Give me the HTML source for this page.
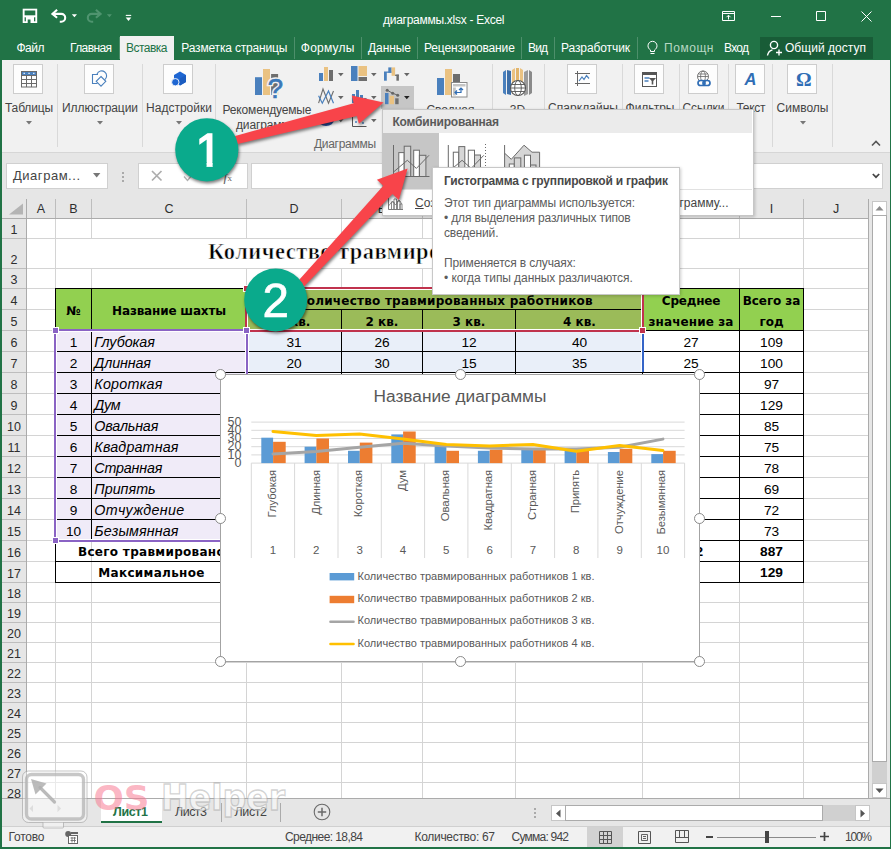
<!DOCTYPE html><html lang="ru"><head><meta charset="utf-8"><title>диаграммы.xlsx - Excel</title><style>
*{box-sizing:border-box;margin:0;padding:0}
html,body{width:891px;height:849px;overflow:hidden;background:#fff}
body{position:relative;font-family:"Liberation Sans",sans-serif;font-size:12px;color:#444;}
.a{position:absolute;white-space:nowrap}
.t{position:absolute;white-space:nowrap;line-height:1}
.c{text-align:center}
.w{color:#fff}
svg{position:absolute;overflow:visible}
</style></head><body>
<div class="a" style="left:0px;top:0px;width:891px;height:60px;background:#217346"></div>
<div class="t" style="left:383px;top:14px;color:#fff;font-size:12px;letter-spacing:-0.273px">диаграммы.xlsx - Excel</div>
<svg style="left:0;top:0" width="150" height="33" viewBox="0 0 150 33" fill="none" stroke="#fff">
<rect x="22.700" y="8.700" width="14.500" height="14.300" fill="#fff" stroke="none"/><rect x="24.600" y="10.500" width="10.700" height="4.800" fill="#217346" stroke="none"/>
<rect x="24.600" y="17.300" width="1.300" height="4" fill="#217346" stroke="none"/><rect x="34" y="17.300" width="1.300" height="4" fill="#217346" stroke="none"/><rect x="27.700" y="19.500" width="2.800" height="3.500" fill="#217346" stroke="none"/>
<path d="M57.100 9.700l-4.700 4.200 4.700 3.900" stroke-width="2.100"/><path d="M52.800 13.900h8.500a3.900 3.900 0 0 1 0 7.800h-1.500" stroke-width="2.100"/>
<path d="M71.800 14.300h5.200l-2.600 3z" fill="#fff" stroke="none"/>
<g stroke="#4f946f"><path d="M95.900 9.700l4.700 4.200-4.700 3.900" stroke-width="2.100"/><path d="M100.200 13.900h-8.500a3.900 3.900 0 0 0 0 7.800h1.500" stroke-width="2.100"/></g>
<path d="M106.900 14.300h5l-2.500 3z" fill="#4f946f" stroke="none"/>
<path d="M125.800 15.400h5.400" stroke-width="1.100"/><path d="M125.700 17.400h5.600l-2.800 3.500z" fill="#fff" stroke="none"/>
</svg>
<svg style="left:700px;top:0" width="191" height="33" viewBox="700 0 191 33" fill="none" stroke="#fff" stroke-width="1">
<path d="M722.500 11.500h12v9h-12z"/><path d="M722.500 13.500h12"/><path d="M728.500 19.500v-4M726.500 17.200l2-2 2 2"/>
<path d="M771 16.5h10"/>
<path d="M816.5 11.5h9v9h-9z"/>
<path d="M861.5 11.5l10 10M871.5 11.5l-10 10"/>
</svg>
<div class="a" style="left:120px;top:36px;width:54px;height:24px;background:#f1f1f1"></div>
<div class="a" style="left:119px;top:37px;width:1px;height:22px;background:#4d8f6b"></div>
<div class="t" style="left:16.5px;top:41.8px;color:#fff;font-size:12px;letter-spacing:-0.501px">Файл</div>
<div class="t" style="left:70px;top:41.8px;color:#fff;font-size:12px;letter-spacing:-0.612px">Главная</div>
<div class="t" style="left:126px;top:41.8px;color:#217346;font-size:12px;letter-spacing:-0.517px">Вставка</div>
<div class="t" style="left:181.3px;top:41.8px;color:#fff;font-size:12px;letter-spacing:-0.179px">Разметка страницы</div>
<div class="t" style="left:300.8px;top:41.8px;color:#fff;font-size:12px;letter-spacing:0.230px">Формулы</div>
<div class="t" style="left:368px;top:41.8px;color:#fff;font-size:12px;letter-spacing:-0.071px">Данные</div>
<div class="t" style="left:424px;top:41.8px;color:#fff;font-size:12px;letter-spacing:-0.143px">Рецензирование</div>
<div class="t" style="left:528px;top:41.8px;color:#fff;font-size:12px;letter-spacing:-0.855px">Вид</div>
<div class="t" style="left:561px;top:41.8px;color:#fff;font-size:12px;letter-spacing:-0.098px">Разработчик</div>
<div class="t" style="left:664px;top:41.8px;color:#b8d8c4;font-size:12px;letter-spacing:0.555px">Помощн</div>
<div class="t" style="left:724px;top:41.8px;color:#fff;font-size:12px;letter-spacing:-0.716px">Вход</div>
<div class="a" style="left:294px;top:37px;width:1px;height:22px;background:#4d8f6b"></div>
<div class="a" style="left:361px;top:37px;width:1px;height:22px;background:#4d8f6b"></div>
<div class="a" style="left:417px;top:37px;width:1px;height:22px;background:#4d8f6b"></div>
<div class="a" style="left:521px;top:37px;width:1px;height:22px;background:#4d8f6b"></div>
<div class="a" style="left:554px;top:37px;width:1px;height:22px;background:#4d8f6b"></div>
<div class="a" style="left:637px;top:37px;width:1px;height:22px;background:#4d8f6b"></div>
<svg style="left:645px;top:38px" width="16" height="20" viewBox="0 0 16 20" fill="none" stroke="#fff" stroke-width="1">
<path d="M5.5 13.5v-1.5c-1.5-1-2.5-2.3-2.5-4.2a4.5 4.5 0 0 1 9 0c0 1.900-1 3.200-2.500 4.200v1.500z"/><path d="M5.500 15.500h4"/></svg>
<div class="a" style="left:760px;top:37px;width:113px;height:22px;background:#185c37"></div>
<svg style="left:766px;top:39px" width="18" height="18" viewBox="0 0 18 18" fill="none" stroke="#fff" stroke-width="1.4">
<circle cx="8" cy="6" r="3.6"/><path d="M1.5 16.500c0.500-3 2.500-5 5-5.600"/><path d="M13 10.500v6M10 13.500h6"/></svg>
<div class="t" style="left:785px;top:41.8px;color:#fff;font-size:12px;letter-spacing:0.034px">Общий доступ</div>
<div class="a" style="left:0px;top:60px;width:891px;height:92px;background:#f1f1f1"></div>
<div class="a" style="left:0px;top:152px;width:891px;height:1px;background:#d6d6d6"></div>
<div class="a" style="left:13px;top:64px;width:30px;height:30px;background:#fdfdfd;border:1px solid #cdcdcd"></div>
<div class="a" style="left:84px;top:64px;width:30px;height:30px;background:#fdfdfd;border:1px solid #cdcdcd"></div>
<div class="a" style="left:163px;top:64px;width:30px;height:30px;background:#fdfdfd;border:1px solid #cdcdcd"></div>
<div class="t" style="left:5.0px;top:101.5px;font-size:12px;color:#444;letter-spacing:-0.167px;">Таблицы</div>
<div class="t" style="left:62.0px;top:101.5px;font-size:12px;color:#444;letter-spacing:-0.075px;">Иллюстрации</div>
<div class="t" style="left:146.0px;top:101.5px;font-size:12px;color:#444;letter-spacing:0.018px;">Надстройки</div>
<svg style="left:26px;top:121px" width="6" height="4" viewBox="0 0 6 4"><path d="M0 0h6l-3 3.500z" fill="#777"/></svg>
<svg style="left:97px;top:121px" width="6" height="4" viewBox="0 0 6 4"><path d="M0 0h6l-3 3.500z" fill="#777"/></svg>
<svg style="left:176px;top:121px" width="6" height="4" viewBox="0 0 6 4"><path d="M0 0h6l-3 3.500z" fill="#777"/></svg>
<div class="a" style="left:57px;top:64px;width:1px;height:83px;background:#d9d9d9"></div>
<div class="a" style="left:142px;top:64px;width:1px;height:83px;background:#d9d9d9"></div>
<div class="a" style="left:215px;top:64px;width:1px;height:83px;background:#d9d9d9"></div>
<div class="a" style="left:492px;top:64px;width:1px;height:83px;background:#d9d9d9"></div>
<div class="a" style="left:544px;top:64px;width:1px;height:83px;background:#d9d9d9"></div>
<div class="a" style="left:622px;top:64px;width:1px;height:83px;background:#d9d9d9"></div>
<div class="a" style="left:679px;top:64px;width:1px;height:83px;background:#d9d9d9"></div>
<div class="a" style="left:728px;top:64px;width:1px;height:83px;background:#d9d9d9"></div>
<div class="a" style="left:772px;top:64px;width:1px;height:83px;background:#d9d9d9"></div>
<div class="a" style="left:832px;top:64px;width:1px;height:83px;background:#d9d9d9"></div>
<svg style="left:13px;top:64px" width="30" height="30" viewBox="0 0 30 30">
<rect x="8" y="7" width="16" height="4.500" fill="#4a80bd"/><rect x="8.500" y="7.500" width="15" height="15.500" fill="none" stroke="#6a6a6a"/>
<path d="M8.500 15.500h15M8.500 19.500h15M8.500 11.500h15M13.500 11.500v11.500M18.500 11.500v11.500" stroke="#6a6a6a" fill="none"/>
<path d="M10.500 9.300h1.500M15.300 9.300h1.500M20 9.300h1.500" stroke="#fff" stroke-width="1"/></svg>
<svg style="left:84px;top:64px" width="30" height="30" viewBox="0 0 30 30" fill="none" stroke="#4a80bd" stroke-width="1.100">
<path d="M14 10.500h-5.500v9h5"/><path d="M13 10a5 5 0 1 1 7.500 6"/><path d="M17 12.500l4.800 4.800-4.800 4.800-4.800-4.800z" fill="#fdfdfd"/></svg>
<svg style="left:163px;top:64px" width="30" height="30" viewBox="0 0 30 30">
<path d="M17 7.500l6 3.500v7l-6 3.500-6-3.500v-7z" fill="#1e66d2"/><path d="M17 14.500l6-3.500v7l-6 3.500z" fill="#1b5cc0"/>
<circle cx="12.300" cy="18.200" r="3.700" fill="#1e66d2" stroke="#fdfdfd" stroke-width="0.900"/></svg>
<svg style="left:255px;top:66px" width="32" height="34" viewBox="0 0 32 34">
<rect x="0" y="11.200" width="7" height="17.800" fill="#4a80bd"/><rect x="8" y="3" width="7" height="26" fill="#eac282"/><rect x="16.100" y="8" width="7" height="21" fill="#6e6e6e"/>
<text x="12.700" y="31.700" font-family="Liberation Sans,sans-serif" font-size="27.500" fill="#f1f1f1" stroke="#f1f1f1" stroke-width="3.600">?</text>
<text x="12.700" y="31.700" font-family="Liberation Sans,sans-serif" font-size="27.500" fill="#3b78b8" stroke="#3b78b8" stroke-width="0.700">?</text></svg>
<div class="t" style="left:222.5px;top:103.5px;font-size:12px;color:#444;letter-spacing:-0.154px;">Рекомендуемые</div>
<div class="t" style="left:236.0px;top:118.5px;font-size:12px;color:#444;letter-spacing:-0.154px;">диаграммы</div>
<svg style="left:318px;top:64px" width="100" height="66" viewBox="318 64 100 66">
<rect x="319" y="73" width="4" height="8" fill="#4a80bd"/><rect x="324" y="67" width="4" height="14" fill="#eac282"/><rect x="329" y="70" width="4" height="11" fill="#6e6e6e"/>
<rect x="351" y="66" width="6.500" height="15" fill="#4a80bd"/><rect x="358.500" y="66" width="8.500" height="10" fill="#eac282"/><rect x="358.500" y="77" width="8.500" height="4" fill="#6e6e6e"/>
<rect x="384" y="72" width="2.800" height="8.700" fill="#4a80bd"/><rect x="384" y="71.500" width="7.500" height="1.300" fill="#4a80bd"/><rect x="388.300" y="67.400" width="3.300" height="5.400" fill="#4a80bd"/>
<rect x="391.600" y="67.400" width="3.500" height="8.400" fill="#eac282"/><rect x="395.100" y="74.600" width="3.800" height="1.400" fill="#6e6e6e"/><rect x="396.400" y="74.600" width="2.500" height="6.100" fill="#6e6e6e"/>
<rect x="381" y="86" width="33" height="23" fill="#c6c6c6"/>
<path d="M318.600 103.200l4.400-14.200 5.500 14.200 5-12.200" fill="none" stroke="#6e6e6e" stroke-width="1.100"/><path d="M318.600 95.800l3.700 7.400 6.200-12.300 5 12.300" fill="none" stroke="#4a80bd" stroke-width="1.200"/>
<rect x="352" y="94" width="3" height="9" fill="#4a80bd"/><rect x="356" y="90" width="3" height="13" fill="#4a80bd"/><rect x="360" y="95" width="3" height="8" fill="#4a80bd"/><rect x="364" y="98" width="2.500" height="5" fill="#4a80bd"/>
<rect x="385" y="93" width="3.500" height="11.200" fill="#4a80bd"/><rect x="389.600" y="95.800" width="4.400" height="8.400" fill="#eac282"/><rect x="395.200" y="98.300" width="3.400" height="5.900" fill="#6e6e6e"/>
<path d="M387.200 90.200l5.500 3.100 5 1.900" fill="none" stroke="#666" stroke-width="1"/><circle cx="387.200" cy="90.200" r="1.500" fill="#666"/><circle cx="392.700" cy="93.300" r="1.500" fill="#666"/><circle cx="397.700" cy="95.200" r="1.500" fill="#666"/>
<ellipse cx="326" cy="120" rx="8" ry="6" fill="#2d4f9e"/><path d="M326 120l8-2a8 6 0 0 0-8-4z" fill="#eac282"/>
<path d="M352.500 112v14.500h14" fill="none" stroke="#555" stroke-width="1"/>
<circle cx="356" cy="122" r="1" fill="#4a80bd"/><circle cx="360" cy="119" r="1" fill="#eac282"/><circle cx="363" cy="123" r="1" fill="#4a80bd"/><circle cx="364" cy="117" r="1" fill="#eac282"/>
</svg>
<svg style="left:338px;top:73px" width="6" height="4" viewBox="0 0 6 4"><path d="M0 0h5.600l-2.800 3.200z" fill="#666"/></svg>
<svg style="left:371px;top:73px" width="6" height="4" viewBox="0 0 6 4"><path d="M0 0h5.600l-2.800 3.200z" fill="#666"/></svg>
<svg style="left:404px;top:73px" width="6" height="4" viewBox="0 0 6 4"><path d="M0 0h5.600l-2.800 3.200z" fill="#666"/></svg>
<svg style="left:338px;top:96px" width="6" height="4" viewBox="0 0 6 4"><path d="M0 0h5.600l-2.800 3.200z" fill="#666"/></svg>
<svg style="left:371px;top:96px" width="6" height="4" viewBox="0 0 6 4"><path d="M0 0h5.600l-2.800 3.200z" fill="#666"/></svg>
<svg style="left:404px;top:96px" width="6" height="4" viewBox="0 0 6 4"><path d="M0 0h5.600l-2.800 3.200z" fill="#222"/></svg>
<svg style="left:338px;top:119px" width="6" height="4" viewBox="0 0 6 4"><path d="M0 0h5.600l-2.800 3.200z" fill="#666"/></svg>
<svg style="left:371px;top:119px" width="6" height="4" viewBox="0 0 6 4"><path d="M0 0h5.600l-2.800 3.200z" fill="#666"/></svg>
<div class="t" style="left:314.0px;top:138.3px;font-size:12px;color:#666;letter-spacing:-0.294px;">Диаграммы</div>
<svg style="left:436px;top:68px" width="32" height="30" viewBox="436 68 32 30">
<rect x="437" y="78" width="7" height="17" fill="#4a80bd"/><rect x="445" y="69" width="7" height="26" fill="#eac282"/><rect x="453" y="74" width="7" height="9" fill="#6e6e6e"/>
<rect x="451.500" y="82.500" width="15.500" height="14.500" fill="#fff" stroke="#8a8a8a"/><rect x="453" y="84" width="12.500" height="2.500" fill="#c4c4c4"/><rect x="453" y="87.500" width="2.800" height="8" fill="#c4c4c4"/>
<path d="M455 92.500h6v-4M459 90l2-2 2 2M457 90.500l-2 2 2 2" fill="none" stroke="#2f6db5" stroke-width="1.200"/></svg>
<div class="t" style="left:426.4px;top:103.5px;font-size:12px;color:#444;">Сводная</div>
<svg style="left:502px;top:66px" width="32" height="32" viewBox="502 66 32 32">
<path d="M503 72l3-2v25l-3-2z" fill="#4a80bd"/><path d="M507 70l4 1v24l-4-1z" fill="#3e6fa8"/>
<path d="M512 70l3-2v24l-3 2z" fill="#eac282"/><path d="M516 68l3 0v24h-3z" fill="#e2b56c"/><path d="M520 68l3 2v22l-3-0z" fill="#eac282"/>
<path d="M524 72l4-2v24l-4 2z" fill="#9b9b9b"/><path d="M529 70l3 2v21l-3 2z" fill="#8a8a8a"/>
<circle cx="518" cy="88" r="7.500" fill="#fff" stroke="#555" stroke-width="1.100"/><ellipse cx="518" cy="88" rx="3.300" ry="7.500" fill="none" stroke="#555" stroke-width="0.900"/><path d="M510.500 88h15M511.500 84.500h13M511.500 91.500h13" stroke="#555" stroke-width="0.900" fill="none"/></svg>
<div class="t" style="left:509.8px;top:103.5px;font-size:12px;color:#444;">3D</div>
<div class="a" style="left:567px;top:64px;width:30px;height:30px;background:#fdfdfd;border:1px solid #cdcdcd"></div>
<svg style="left:567px;top:64px" width="30" height="30" viewBox="0 0 30 30" fill="none">
<path d="M10.500 7v15M8 9.500h15M8 19.500h15" stroke="#666" stroke-width="1"/><path d="M12 17l3-4 2 2.500 2.500-4 2.500 3" stroke="#4a80bd" stroke-width="1.200"/></svg>
<div class="t" style="left:548.0px;top:101.5px;font-size:12px;color:#444;letter-spacing:0.052px;">Спарклайны</div>
<div class="a" style="left:634px;top:64px;width:30px;height:30px;background:#fdfdfd;border:1px solid #cdcdcd"></div>
<svg style="left:634px;top:64px" width="30" height="30" viewBox="0 0 30 30">
<rect x="8.500" y="8.500" width="14" height="14" fill="#fff" stroke="#555"/><rect x="8" y="8" width="15" height="3" fill="#555"/>
<path d="M10.500 14h5M10.500 17h4" stroke="#4a80bd" stroke-width="1.400"/><path d="M15 14h7l-2.700 3v3.500h-1.600v-3.500z" fill="#555"/></svg>
<div class="t" style="left:625.5px;top:101.5px;font-size:12px;color:#444;letter-spacing:0.010px;">Фильтры</div>
<div class="a" style="left:688px;top:64px;width:30px;height:30px;background:#fdfdfd;border:1px solid #cdcdcd"></div>
<svg style="left:688px;top:64px" width="30" height="30" viewBox="0 0 30 30" fill="none">
<circle cx="15" cy="12.500" r="5.500" stroke="#666" stroke-width="0.900"/><ellipse cx="15" cy="12.500" rx="2.400" ry="5.500" stroke="#666" stroke-width="0.800"/><path d="M9.500 12.500h11M10.300 10h9.400" stroke="#666" stroke-width="0.800"/>
<rect x="10" y="16.500" width="7" height="5" rx="2.500" stroke="#2f6db5" stroke-width="1.700" fill="#fdfdfd"/><rect x="15" y="16.500" width="7" height="5" rx="2.500" stroke="#2f6db5" stroke-width="1.700"/></svg>
<div class="t" style="left:682.5px;top:101.5px;font-size:12px;color:#444;letter-spacing:-0.049px;">Ссылки</div>
<div class="a" style="left:735px;top:64px;width:30px;height:30px;background:#fdfdfd;border:1px solid #cdcdcd"></div>
<div class="t" style="left:744.5px;top:70.5px;font-style:italic;font-weight:bold;font-size:16.500px;color:#2f6db5">A</div>
<div class="t" style="left:736.5px;top:101.5px;font-size:12px;color:#444;letter-spacing:-0.303px;">Текст</div>
<div class="a" style="left:787px;top:64px;width:30px;height:30px;background:#fdfdfd;border:1px solid #cdcdcd"></div>
<div class="t" style="left:796px;top:69.5px;font-family:Liberation Serif,serif;font-weight:bold;font-size:19.500px;color:#2f6db5">Ω</div>
<div class="t" style="left:776.5px;top:101.5px;font-size:12px;color:#444;letter-spacing:0.017px;">Символы</div>
<svg style="left:799.5px;top:121px" width="6" height="4" viewBox="0 0 6 4"><path d="M0 0h6l-3 3.500z" fill="#777"/></svg>
<svg style="left:871px;top:140px" width="10" height="7" viewBox="0 0 10 7"><path d="M1 5.500l4-4 4 4" fill="none" stroke="#555" stroke-width="1.600"/></svg>
<div class="a" style="left:0px;top:153px;width:891px;height:44px;background:#e6e6e6"></div>
<div class="a" style="left:6px;top:163px;width:102px;height:26px;background:#fff;border:1px solid #d0d0d0"></div>
<div class="t" style="left:13px;top:169px;font-size:13px;color:#444;letter-spacing:0.525px">Диаграм...</div>
<svg style="left:93px;top:173px" width="8" height="5" viewBox="0 0 8 5"><path d="M0 0h7.400l-3.700 4.400z" fill="#777"/></svg>
<div class="a" style="left:122px;top:172px;width:1.5px;height:1.5px;background:#aaa"></div>
<div class="a" style="left:122px;top:176px;width:1.5px;height:1.5px;background:#aaa"></div>
<div class="a" style="left:122px;top:180px;width:1.5px;height:1.5px;background:#aaa"></div>
<div class="a" style="left:138px;top:163px;width:110px;height:26px;background:#fff;border:1px solid #d0d0d0"></div>
<svg style="left:151px;top:170px" width="12" height="12" viewBox="0 0 12 12"><path d="M1 1l9.500 9.500M10.500 1l-9.500 9.500" stroke="#adadad" stroke-width="1.700" fill="none"/></svg>
<svg style="left:183px;top:170px" width="14" height="12" viewBox="0 0 14 12"><path d="M1 6.500l3.500 4 8-9.500" stroke="#b0b0b0" stroke-width="1.300" fill="none"/></svg>
<div class="t" style="left:223.5px;top:170px;font-family:Liberation Serif,serif;font-size:14px;color:#666"><i>f</i><span style="font-size:9px">x</span></div>
<div class="a" style="left:251px;top:163px;width:632px;height:26px;background:#fff;border:1px solid #d0d0d0"></div>
<svg style="left:872px;top:172.500px" width="8" height="6" viewBox="0 0 8 6"><path d="M0.800 1l3.200 3.200 3.200-3.200" fill="none" stroke="#444" stroke-width="1.700"/></svg>
<div class="a" style="left:0px;top:197px;width:891px;height:22px;background:#e6e6e6"></div>
<div class="a" style="left:0px;top:219px;width:27px;height:579px;background:#e6e6e6"></div>
<div class="a" style="left:869px;top:197px;width:22px;height:606px;background:#e6e6e6"></div>
<div class="a" style="left:27px;top:219px;width:841px;height:579px;background:#fff"></div>
<div class="a" style="left:55px;top:219px;width:1px;height:579px;background:#d4d4d4"></div>
<div class="a" style="left:91px;top:219px;width:1px;height:579px;background:#d4d4d4"></div>
<div class="a" style="left:246px;top:219px;width:1px;height:579px;background:#d4d4d4"></div>
<div class="a" style="left:341px;top:219px;width:1px;height:579px;background:#d4d4d4"></div>
<div class="a" style="left:422px;top:219px;width:1px;height:579px;background:#d4d4d4"></div>
<div class="a" style="left:515px;top:219px;width:1px;height:579px;background:#d4d4d4"></div>
<div class="a" style="left:642px;top:219px;width:1px;height:579px;background:#d4d4d4"></div>
<div class="a" style="left:739px;top:219px;width:1px;height:579px;background:#d4d4d4"></div>
<div class="a" style="left:803px;top:219px;width:1px;height:579px;background:#d4d4d4"></div>
<div class="a" style="left:27px;top:238px;width:841px;height:1px;background:#d4d4d4"></div>
<div class="a" style="left:27px;top:268px;width:841px;height:1px;background:#d4d4d4"></div>
<div class="a" style="left:27px;top:288px;width:841px;height:1px;background:#d4d4d4"></div>
<div class="a" style="left:27px;top:309px;width:841px;height:1px;background:#d4d4d4"></div>
<div class="a" style="left:27px;top:330px;width:841px;height:1px;background:#d4d4d4"></div>
<div class="a" style="left:27px;top:351px;width:841px;height:1px;background:#d4d4d4"></div>
<div class="a" style="left:27px;top:372px;width:841px;height:1px;background:#d4d4d4"></div>
<div class="a" style="left:27px;top:393px;width:841px;height:1px;background:#d4d4d4"></div>
<div class="a" style="left:27px;top:414px;width:841px;height:1px;background:#d4d4d4"></div>
<div class="a" style="left:27px;top:435px;width:841px;height:1px;background:#d4d4d4"></div>
<div class="a" style="left:27px;top:456px;width:841px;height:1px;background:#d4d4d4"></div>
<div class="a" style="left:27px;top:477px;width:841px;height:1px;background:#d4d4d4"></div>
<div class="a" style="left:27px;top:498px;width:841px;height:1px;background:#d4d4d4"></div>
<div class="a" style="left:27px;top:519px;width:841px;height:1px;background:#d4d4d4"></div>
<div class="a" style="left:27px;top:540px;width:841px;height:1px;background:#d4d4d4"></div>
<div class="a" style="left:27px;top:561px;width:841px;height:1px;background:#d4d4d4"></div>
<div class="a" style="left:27px;top:582px;width:841px;height:1px;background:#d4d4d4"></div>
<div class="a" style="left:27px;top:602px;width:841px;height:1px;background:#d4d4d4"></div>
<div class="a" style="left:27px;top:622px;width:841px;height:1px;background:#d4d4d4"></div>
<div class="a" style="left:27px;top:642px;width:841px;height:1px;background:#d4d4d4"></div>
<div class="a" style="left:27px;top:662px;width:841px;height:1px;background:#d4d4d4"></div>
<div class="a" style="left:27px;top:682px;width:841px;height:1px;background:#d4d4d4"></div>
<div class="a" style="left:27px;top:702px;width:841px;height:1px;background:#d4d4d4"></div>
<div class="a" style="left:27px;top:722px;width:841px;height:1px;background:#d4d4d4"></div>
<div class="a" style="left:27px;top:742px;width:841px;height:1px;background:#d4d4d4"></div>
<div class="a" style="left:27px;top:762px;width:841px;height:1px;background:#d4d4d4"></div>
<div class="a" style="left:27px;top:782px;width:841px;height:1px;background:#d4d4d4"></div>
<div class="a" style="left:0px;top:218px;width:869px;height:1px;background:#ababab"></div>
<div class="a" style="left:26px;top:199px;width:1px;height:599px;background:#ababab"></div>
<div class="a" style="left:868px;top:199px;width:1px;height:599px;background:#ababab"></div>
<div class="a" style="left:55px;top:199px;width:1px;height:19px;background:#bdbdbd"></div>
<div class="a" style="left:91px;top:199px;width:1px;height:19px;background:#bdbdbd"></div>
<div class="a" style="left:246px;top:199px;width:1px;height:19px;background:#bdbdbd"></div>
<div class="a" style="left:341px;top:199px;width:1px;height:19px;background:#bdbdbd"></div>
<div class="a" style="left:422px;top:199px;width:1px;height:19px;background:#bdbdbd"></div>
<div class="a" style="left:515px;top:199px;width:1px;height:19px;background:#bdbdbd"></div>
<div class="a" style="left:642px;top:199px;width:1px;height:19px;background:#bdbdbd"></div>
<div class="a" style="left:739px;top:199px;width:1px;height:19px;background:#bdbdbd"></div>
<div class="a" style="left:803px;top:199px;width:1px;height:19px;background:#bdbdbd"></div>
<div class="a" style="left:2px;top:238px;width:24px;height:1px;background:#bdbdbd"></div>
<div class="a" style="left:2px;top:268px;width:24px;height:1px;background:#bdbdbd"></div>
<div class="a" style="left:2px;top:288px;width:24px;height:1px;background:#bdbdbd"></div>
<div class="a" style="left:2px;top:309px;width:24px;height:1px;background:#bdbdbd"></div>
<div class="a" style="left:2px;top:330px;width:24px;height:1px;background:#bdbdbd"></div>
<div class="a" style="left:2px;top:351px;width:24px;height:1px;background:#bdbdbd"></div>
<div class="a" style="left:2px;top:372px;width:24px;height:1px;background:#bdbdbd"></div>
<div class="a" style="left:2px;top:393px;width:24px;height:1px;background:#bdbdbd"></div>
<div class="a" style="left:2px;top:414px;width:24px;height:1px;background:#bdbdbd"></div>
<div class="a" style="left:2px;top:435px;width:24px;height:1px;background:#bdbdbd"></div>
<div class="a" style="left:2px;top:456px;width:24px;height:1px;background:#bdbdbd"></div>
<div class="a" style="left:2px;top:477px;width:24px;height:1px;background:#bdbdbd"></div>
<div class="a" style="left:2px;top:498px;width:24px;height:1px;background:#bdbdbd"></div>
<div class="a" style="left:2px;top:519px;width:24px;height:1px;background:#bdbdbd"></div>
<div class="a" style="left:2px;top:540px;width:24px;height:1px;background:#bdbdbd"></div>
<div class="a" style="left:2px;top:561px;width:24px;height:1px;background:#bdbdbd"></div>
<div class="a" style="left:2px;top:582px;width:24px;height:1px;background:#bdbdbd"></div>
<div class="a" style="left:2px;top:602px;width:24px;height:1px;background:#bdbdbd"></div>
<div class="a" style="left:2px;top:622px;width:24px;height:1px;background:#bdbdbd"></div>
<div class="a" style="left:2px;top:642px;width:24px;height:1px;background:#bdbdbd"></div>
<div class="a" style="left:2px;top:662px;width:24px;height:1px;background:#bdbdbd"></div>
<div class="a" style="left:2px;top:682px;width:24px;height:1px;background:#bdbdbd"></div>
<div class="a" style="left:2px;top:702px;width:24px;height:1px;background:#bdbdbd"></div>
<div class="a" style="left:2px;top:722px;width:24px;height:1px;background:#bdbdbd"></div>
<div class="a" style="left:2px;top:742px;width:24px;height:1px;background:#bdbdbd"></div>
<div class="a" style="left:2px;top:762px;width:24px;height:1px;background:#bdbdbd"></div>
<div class="a" style="left:2px;top:782px;width:24px;height:1px;background:#bdbdbd"></div>
<svg style="left:8px;top:203px" width="16" height="12" viewBox="0 0 16 12"><path d="M15 0.500v11h-14z" fill="#b4b4b4"/></svg>
<div class="t c" style="left:-359.0px;width:800px;top:203.2px;font-size:12.5px;color:#2e2e2e">A</div>
<div class="t c" style="left:-326.5px;width:800px;top:203.2px;font-size:12.5px;color:#2e2e2e">B</div>
<div class="t c" style="left:-231.0px;width:800px;top:203.2px;font-size:12.5px;color:#2e2e2e">C</div>
<div class="t c" style="left:-106.0px;width:800px;top:203.2px;font-size:12.5px;color:#2e2e2e">D</div>
<div class="t c" style="left:-18.0px;width:800px;top:203.2px;font-size:12.5px;color:#2e2e2e">E</div>
<div class="t c" style="left:69.0px;width:800px;top:203.2px;font-size:12.5px;color:#2e2e2e">F</div>
<div class="t c" style="left:179.0px;width:800px;top:203.2px;font-size:12.5px;color:#2e2e2e">G</div>
<div class="t c" style="left:291.0px;width:800px;top:203.2px;font-size:12.5px;color:#2e2e2e">H</div>
<div class="t c" style="left:371.5px;width:800px;top:203.2px;font-size:12.5px;color:#2e2e2e">I</div>
<div class="t c" style="left:436.0px;width:800px;top:203.2px;font-size:12.5px;color:#2e2e2e">J</div>
<div class="t c" style="left:2px;width:24px;top:224.1px;font-size:12.5px;color:#2e2e2e">1</div>
<div class="t c" style="left:2px;width:24px;top:254.1px;font-size:12.5px;color:#2e2e2e">2</div>
<div class="t c" style="left:2px;width:24px;top:274.1px;font-size:12.5px;color:#2e2e2e">3</div>
<div class="t c" style="left:2px;width:24px;top:295.1px;font-size:12.5px;color:#2e2e2e">4</div>
<div class="t c" style="left:2px;width:24px;top:316.1px;font-size:12.5px;color:#2e2e2e">5</div>
<div class="t c" style="left:2px;width:24px;top:337.1px;font-size:12.5px;color:#2e2e2e">6</div>
<div class="t c" style="left:2px;width:24px;top:358.1px;font-size:12.5px;color:#2e2e2e">7</div>
<div class="t c" style="left:2px;width:24px;top:379.1px;font-size:12.5px;color:#2e2e2e">8</div>
<div class="t c" style="left:2px;width:24px;top:400.1px;font-size:12.5px;color:#2e2e2e">9</div>
<div class="t c" style="left:2px;width:24px;top:421.1px;font-size:12.5px;color:#2e2e2e">10</div>
<div class="t c" style="left:2px;width:24px;top:442.1px;font-size:12.5px;color:#2e2e2e">11</div>
<div class="t c" style="left:2px;width:24px;top:463.1px;font-size:12.5px;color:#2e2e2e">12</div>
<div class="t c" style="left:2px;width:24px;top:484.1px;font-size:12.5px;color:#2e2e2e">13</div>
<div class="t c" style="left:2px;width:24px;top:505.1px;font-size:12.5px;color:#2e2e2e">14</div>
<div class="t c" style="left:2px;width:24px;top:526.1px;font-size:12.5px;color:#2e2e2e">15</div>
<div class="t c" style="left:2px;width:24px;top:547.1px;font-size:12.5px;color:#2e2e2e">16</div>
<div class="t c" style="left:2px;width:24px;top:568.1px;font-size:12.5px;color:#2e2e2e">17</div>
<div class="t c" style="left:2px;width:24px;top:588.1px;font-size:12.5px;color:#2e2e2e">18</div>
<div class="t c" style="left:2px;width:24px;top:608.1px;font-size:12.5px;color:#2e2e2e">19</div>
<div class="t c" style="left:2px;width:24px;top:628.1px;font-size:12.5px;color:#2e2e2e">20</div>
<div class="t c" style="left:2px;width:24px;top:648.1px;font-size:12.5px;color:#2e2e2e">21</div>
<div class="t c" style="left:2px;width:24px;top:668.1px;font-size:12.5px;color:#2e2e2e">22</div>
<div class="t c" style="left:2px;width:24px;top:688.1px;font-size:12.5px;color:#2e2e2e">23</div>
<div class="t c" style="left:2px;width:24px;top:708.1px;font-size:12.5px;color:#2e2e2e">24</div>
<div class="t c" style="left:2px;width:24px;top:728.1px;font-size:12.5px;color:#2e2e2e">25</div>
<div class="t c" style="left:2px;width:24px;top:748.1px;font-size:12.5px;color:#2e2e2e">26</div>
<div class="t c" style="left:2px;width:24px;top:768.1px;font-size:12.5px;color:#2e2e2e">27</div>
<div class="t c" style="left:2px;width:24px;top:788.1px;font-size:12.5px;color:#2e2e2e">28</div>
<div class="a" style="left:56px;top:239px;width:747px;height:29px;background:#fff"></div>
<div class="a" style="left:56px;top:219px;width:0px;height:0px;"></div>
<div class="t c" style="left:29.30000000000001px;width:800px;top:240.8px;font-family:Liberation Serif,serif;font-weight:bold;font-size:22.500px;color:#000;-webkit-text-stroke:0.550px #fff;letter-spacing:0.489px">Количество травмированных работников</div>
<div class="a" style="left:55px;top:288px;width:191px;height:42px;background:#92d050"></div>
<div class="a" style="left:246px;top:288px;width:396px;height:42px;background:#9bbb59"></div>
<div class="a" style="left:642px;top:288px;width:161px;height:42px;background:#92d050"></div>
<div class="a" style="left:56px;top:331px;width:191px;height:210px;background:#f0ebf8"></div>
<div class="a" style="left:247px;top:331px;width:395px;height:42px;background:#e9eff9"></div>
<div class="a" style="left:55px;top:288px;width:749px;height:1px;background:#000"></div>
<div class="a" style="left:246px;top:309px;width:397px;height:1px;background:#000"></div>
<div class="a" style="left:55px;top:330px;width:749px;height:1px;background:#000"></div>
<div class="a" style="left:55px;top:351px;width:749px;height:1px;background:#000"></div>
<div class="a" style="left:55px;top:372px;width:749px;height:1px;background:#000"></div>
<div class="a" style="left:55px;top:393px;width:749px;height:1px;background:#000"></div>
<div class="a" style="left:55px;top:414px;width:749px;height:1px;background:#000"></div>
<div class="a" style="left:55px;top:435px;width:749px;height:1px;background:#000"></div>
<div class="a" style="left:55px;top:456px;width:749px;height:1px;background:#000"></div>
<div class="a" style="left:55px;top:477px;width:749px;height:1px;background:#000"></div>
<div class="a" style="left:55px;top:498px;width:749px;height:1px;background:#000"></div>
<div class="a" style="left:55px;top:519px;width:749px;height:1px;background:#000"></div>
<div class="a" style="left:55px;top:540px;width:749px;height:1px;background:#000"></div>
<div class="a" style="left:55px;top:561px;width:749px;height:1px;background:#000"></div>
<div class="a" style="left:55px;top:582px;width:749px;height:1px;background:#000"></div>
<div class="a" style="left:55px;top:288px;width:1px;height:295px;background:#000"></div>
<div class="a" style="left:91px;top:288px;width:1px;height:253px;background:#000"></div>
<div class="a" style="left:246px;top:288px;width:1px;height:295px;background:#000"></div>
<div class="a" style="left:341px;top:309px;width:1px;height:274px;background:#000"></div>
<div class="a" style="left:422px;top:309px;width:1px;height:274px;background:#000"></div>
<div class="a" style="left:515px;top:309px;width:1px;height:274px;background:#000"></div>
<div class="a" style="left:642px;top:288px;width:1px;height:295px;background:#000"></div>
<div class="a" style="left:739px;top:288px;width:1px;height:295px;background:#000"></div>
<div class="a" style="left:803px;top:288px;width:1px;height:295px;background:#000"></div>
<div class="t c" style="left:-326.5px;width:800px;top:304.5px;font-family:DejaVu Sans,sans-serif;font-weight:bold;color:#000;font-size:12px;">№</div>
<div class="t c" style="left:-231px;width:800px;top:304.5px;font-family:DejaVu Sans,sans-serif;font-weight:bold;color:#000;font-size:12px;letter-spacing:-0.170px;">Название шахты</div>
<div class="t c" style="left:44.80000000000001px;width:800px;top:294.5px;font-family:DejaVu Sans,sans-serif;font-weight:bold;color:#000;font-size:12px;letter-spacing:0.229px;">Количество травмированных работников</div>
<div class="t c" style="left:-106px;width:800px;top:315.5px;font-family:DejaVu Sans,sans-serif;font-weight:bold;color:#000;font-size:12px;">1 кв.</div>
<div class="t c" style="left:-18px;width:800px;top:315.5px;font-family:DejaVu Sans,sans-serif;font-weight:bold;color:#000;font-size:12px;">2 кв.</div>
<div class="t c" style="left:69px;width:800px;top:315.5px;font-family:DejaVu Sans,sans-serif;font-weight:bold;color:#000;font-size:12px;">3 кв.</div>
<div class="t c" style="left:179.5px;width:800px;top:315.5px;font-family:DejaVu Sans,sans-serif;font-weight:bold;color:#000;font-size:12px;">4 кв.</div>
<div class="t c" style="left:291px;width:800px;top:294.7px;font-family:DejaVu Sans,sans-serif;font-weight:bold;color:#000;font-size:12px;letter-spacing:-0.216px;">Среднее</div>
<div class="t c" style="left:291px;width:800px;top:315.5px;font-family:DejaVu Sans,sans-serif;font-weight:bold;color:#000;font-size:12px;letter-spacing:0.118px;">значение за</div>
<div class="t c" style="left:371.5px;width:800px;top:294.7px;font-family:DejaVu Sans,sans-serif;font-weight:bold;color:#000;font-size:12px;letter-spacing:-0.094px;">Всего за</div>
<div class="t c" style="left:371.5px;width:800px;top:315.5px;font-family:DejaVu Sans,sans-serif;font-weight:bold;color:#000;font-size:12px;">год</div>
<div class="t c" style="left:-326.5px;width:800px;top:335.6px;font-size:13.7px;color:#000;">1</div>
<div class="t" style="left:94.3px;top:335.3px;font-size:14.3px;color:#000;font-style:italic;letter-spacing:-0.037px">Глубокая</div>
<div class="t c" style="left:371.5px;width:800px;top:335.6px;font-size:13.7px;color:#000;">109</div>
<div class="t c" style="left:-106px;width:800px;top:335.6px;font-size:13.7px;color:#000;">31</div>
<div class="t c" style="left:-18px;width:800px;top:335.6px;font-size:13.7px;color:#000;">26</div>
<div class="t c" style="left:69px;width:800px;top:335.6px;font-size:13.7px;color:#000;">12</div>
<div class="t c" style="left:179.5px;width:800px;top:335.6px;font-size:13.7px;color:#000;">40</div>
<div class="t c" style="left:291px;width:800px;top:335.6px;font-size:13.7px;color:#000;">27</div>
<div class="t c" style="left:-326.5px;width:800px;top:356.6px;font-size:13.7px;color:#000;">2</div>
<div class="t" style="left:94.3px;top:356.3px;font-size:14.3px;color:#000;font-style:italic;letter-spacing:-0.136px">Длинная</div>
<div class="t c" style="left:371.5px;width:800px;top:356.6px;font-size:13.7px;color:#000;">100</div>
<div class="t c" style="left:-106px;width:800px;top:356.6px;font-size:13.7px;color:#000;">20</div>
<div class="t c" style="left:-18px;width:800px;top:356.6px;font-size:13.7px;color:#000;">30</div>
<div class="t c" style="left:69px;width:800px;top:356.6px;font-size:13.7px;color:#000;">15</div>
<div class="t c" style="left:179.5px;width:800px;top:356.6px;font-size:13.7px;color:#000;">35</div>
<div class="t c" style="left:291px;width:800px;top:356.6px;font-size:13.7px;color:#000;">25</div>
<div class="t c" style="left:-326.5px;width:800px;top:377.6px;font-size:13.7px;color:#000;">3</div>
<div class="t" style="left:94.3px;top:377.3px;font-size:14.3px;color:#000;font-style:italic;letter-spacing:0.208px">Короткая</div>
<div class="t c" style="left:371.5px;width:800px;top:377.6px;font-size:13.7px;color:#000;">97</div>
<div class="t c" style="left:-326.5px;width:800px;top:398.6px;font-size:13.7px;color:#000;">4</div>
<div class="t" style="left:94.3px;top:398.3px;font-size:14.3px;color:#000;font-style:italic;letter-spacing:-0.441px">Дум</div>
<div class="t c" style="left:371.5px;width:800px;top:398.6px;font-size:13.7px;color:#000;">129</div>
<div class="t c" style="left:-326.5px;width:800px;top:419.6px;font-size:13.7px;color:#000;">5</div>
<div class="t" style="left:94.3px;top:419.3px;font-size:14.3px;color:#000;font-style:italic;letter-spacing:-0.159px">Овальная</div>
<div class="t c" style="left:371.5px;width:800px;top:419.6px;font-size:13.7px;color:#000;">85</div>
<div class="t c" style="left:-326.5px;width:800px;top:440.6px;font-size:13.7px;color:#000;">6</div>
<div class="t" style="left:94.3px;top:440.3px;font-size:14.3px;color:#000;font-style:italic;letter-spacing:0.165px">Квадратная</div>
<div class="t c" style="left:371.5px;width:800px;top:440.6px;font-size:13.7px;color:#000;">75</div>
<div class="t c" style="left:-326.5px;width:800px;top:461.6px;font-size:13.7px;color:#000;">7</div>
<div class="t" style="left:94.3px;top:461.3px;font-size:14.3px;color:#000;font-style:italic;letter-spacing:-0.188px">Странная</div>
<div class="t c" style="left:371.5px;width:800px;top:461.6px;font-size:13.7px;color:#000;">78</div>
<div class="t c" style="left:-326.5px;width:800px;top:482.6px;font-size:13.7px;color:#000;">8</div>
<div class="t" style="left:94.3px;top:482.3px;font-size:14.3px;color:#000;font-style:italic;letter-spacing:0.015px">Припять</div>
<div class="t c" style="left:371.5px;width:800px;top:482.6px;font-size:13.7px;color:#000;">69</div>
<div class="t c" style="left:-326.5px;width:800px;top:503.6px;font-size:13.7px;color:#000;">9</div>
<div class="t" style="left:94.3px;top:503.3px;font-size:14.3px;color:#000;font-style:italic;letter-spacing:0.298px">Отчуждение</div>
<div class="t c" style="left:371.5px;width:800px;top:503.6px;font-size:13.7px;color:#000;">72</div>
<div class="t c" style="left:-326.5px;width:800px;top:524.6px;font-size:13.7px;color:#000;">10</div>
<div class="t" style="left:94.3px;top:524.3000000000001px;font-size:14.3px;color:#000;font-style:italic;letter-spacing:0.129px">Безымянная</div>
<div class="t c" style="left:371.5px;width:800px;top:524.6px;font-size:13.7px;color:#000;">73</div>
<div class="t c" style="left:-248.5px;width:800px;top:546.3px;font-family:DejaVu Sans,sans-serif;font-weight:bold;color:#000;font-size:12px;letter-spacing:0.300px">Всего травмировано</div>
<div class="t c" style="left:-248.5px;width:800px;top:567.3px;font-family:DejaVu Sans,sans-serif;font-weight:bold;color:#000;font-size:12px;letter-spacing:0.300px">Максимальное</div>
<div class="t c" style="left:371.5px;width:800px;top:545.2px;font-size:13.7px;color:#000;font-weight:bold">887</div>
<div class="t c" style="left:371.5px;width:800px;top:566.2px;font-size:13.7px;color:#000;font-weight:bold">129</div>
<div class="t" style="right:188px;top:545.2px;text-align:right;font-size:13.7px;color:#000;font-weight:bold">222</div>
<div class="a" style="left:54px;top:329px;width:194px;height:213px;border:2px solid #8a63c4;box-shadow:inset 0 0 0 1px #fff"></div>
<div class="a" style="left:248px;top:332px;width:1px;height:40px;background:#fff"></div>
<div class="a" style="left:245px;top:287px;width:399px;height:45px;border:2px solid #c0334d;box-shadow:inset 0 0 0 1px #fff"></div>
<div class="a" style="left:642px;top:331px;width:2px;height:41px;background:#3565c8;box-shadow:-1px 0 0 0 #fff"></div>
<div class="a" style="left:52px;top:327px;width:7px;height:7px;background:#8a63c4;border:1px solid #fff"></div>
<div class="a" style="left:243px;top:327px;width:7px;height:7px;background:#8a63c4;border:1px solid #fff"></div>
<div class="a" style="left:52px;top:537px;width:7px;height:7px;background:#8a63c4;border:1px solid #fff"></div>
<div class="a" style="left:243px;top:285px;width:7px;height:7px;background:#c0334d;border:1px solid #fff"></div>
<div class="a" style="left:639px;top:327px;width:7px;height:7px;background:#c0334d;border:1px solid #fff"></div>
<div class="a" style="left:872px;top:216px;width:15px;height:570px;background:#d0d0d0"></div>
<div class="a" style="left:872px;top:201px;width:15px;height:15px;background:#fff;border:1px solid #c6c6c6"></div>
<svg style="left:875px;top:205px" width="9" height="6" viewBox="0 0 9 6"><path d="M0.500 5.500l4-4.500 4 4.500z" fill="#8a8a8a"/></svg>
<div class="a" style="left:872px;top:215px;width:15px;height:547px;background:#fff;border:1px solid #ababab"></div>
<div class="a" style="left:872px;top:783px;width:15px;height:15px;background:#fff;border:1px solid #c6c6c6"></div>
<svg style="left:875px;top:788px" width="9" height="6" viewBox="0 0 9 6"><path d="M0.500 0.500l4 4.500 4-4.500z" fill="#555"/></svg>
<div class="a" style="left:220px;top:374px;width:480px;height:288px;background:#fff;border:1px solid #a3a3a3"></div>
<div class="t c" style="left:60px;width:800px;top:388px;font-size:17.300px;color:#595959;letter-spacing:-0.016px">Название диаграммы</div>
<svg style="left:0;top:0" width="891" height="849" viewBox="0 0 891 849"><path d="M251.3 463.1H684.6" stroke="#d9d9d9" stroke-width="1" fill="none"/><path d="M251.3 454.9H684.6" stroke="#d9d9d9" stroke-width="1" fill="none"/><path d="M251.3 446.7H684.6" stroke="#d9d9d9" stroke-width="1" fill="none"/><path d="M251.3 438.5H684.6" stroke="#d9d9d9" stroke-width="1" fill="none"/><path d="M251.3 430.3H684.6" stroke="#d9d9d9" stroke-width="1" fill="none"/><path d="M251.3 422.1H684.6" stroke="#d9d9d9" stroke-width="1" fill="none"/><path d="M251.3 463.1V558" stroke="#d9d9d9" stroke-width="1" fill="none"/><path d="M294.6 463.1V558" stroke="#d9d9d9" stroke-width="1" fill="none"/><path d="M338.0 463.1V558" stroke="#d9d9d9" stroke-width="1" fill="none"/><path d="M381.3 463.1V558" stroke="#d9d9d9" stroke-width="1" fill="none"/><path d="M424.6 463.1V558" stroke="#d9d9d9" stroke-width="1" fill="none"/><path d="M467.9 463.1V558" stroke="#d9d9d9" stroke-width="1" fill="none"/><path d="M511.3 463.1V558" stroke="#d9d9d9" stroke-width="1" fill="none"/><path d="M554.6 463.1V558" stroke="#d9d9d9" stroke-width="1" fill="none"/><path d="M597.9 463.1V558" stroke="#d9d9d9" stroke-width="1" fill="none"/><path d="M641.3 463.1V558" stroke="#d9d9d9" stroke-width="1" fill="none"/><path d="M684.6 463.1V558" stroke="#d9d9d9" stroke-width="1" fill="none"/><rect x="261.3" y="437.7" width="11.8" height="25.4" fill="#5b9bd5"/><rect x="273.1" y="441.8" width="12.6" height="21.3" fill="#ed7d31"/><rect x="304.6" y="446.7" width="11.8" height="16.4" fill="#5b9bd5"/><rect x="316.4" y="438.5" width="12.6" height="24.6" fill="#ed7d31"/><rect x="348.0" y="450.8" width="11.8" height="12.3" fill="#5b9bd5"/><rect x="359.8" y="442.6" width="12.6" height="20.5" fill="#ed7d31"/><rect x="391.3" y="434.4" width="11.8" height="28.7" fill="#5b9bd5"/><rect x="403.1" y="431.5" width="12.6" height="31.6" fill="#ed7d31"/><rect x="434.6" y="445.1" width="11.8" height="18.0" fill="#5b9bd5"/><rect x="446.4" y="450.8" width="12.6" height="12.3" fill="#ed7d31"/><rect x="477.9" y="450.8" width="11.8" height="12.3" fill="#5b9bd5"/><rect x="489.8" y="449.6" width="12.6" height="13.5" fill="#ed7d31"/><rect x="521.3" y="449.6" width="11.8" height="13.5" fill="#5b9bd5"/><rect x="533.1" y="449.2" width="12.6" height="13.9" fill="#ed7d31"/><rect x="564.6" y="450.8" width="11.8" height="12.3" fill="#5b9bd5"/><rect x="576.4" y="450.8" width="12.6" height="12.3" fill="#ed7d31"/><rect x="607.9" y="452.0" width="11.8" height="11.1" fill="#5b9bd5"/><rect x="619.7" y="448.8" width="12.6" height="14.3" fill="#ed7d31"/><rect x="651.3" y="454.1" width="11.8" height="9.0" fill="#5b9bd5"/><rect x="663.1" y="450.8" width="12.6" height="12.3" fill="#ed7d31"/><polyline points="273.0,453.9 316.3,451.4 359.6,447.3 403.0,443.2 446.3,446.1 489.6,448.1 532.9,448.9 576.3,448.9 619.6,447.3 662.9,439.1" fill="none" stroke="#a5a5a5" stroke-width="3" stroke-linecap="round" stroke-linejoin="round"/><polyline points="273.0,431.5 316.3,435.6 359.6,434.0 403.0,438.9 446.3,444.6 489.6,445.9 532.9,444.6 576.3,451.2 619.6,445.4 662.9,450.4" fill="none" stroke="#ffc000" stroke-width="3" stroke-linecap="round" stroke-linejoin="round"/><rect x="329.600" y="573" width="24.600" height="7.400" fill="#5b9bd5"/><rect x="329.600" y="595.800" width="24.600" height="7.400" fill="#ed7d31"/><path d="M330.500 621.700h23" stroke="#a5a5a5" stroke-width="2.600" stroke-linecap="round"/><path d="M330.500 644h23" stroke="#ffc000" stroke-width="2.600" stroke-linecap="round"/></svg>
<div class="t" style="right:649.5px;top:456.8px;text-align:right;font-size:12.500px;color:#595959">0</div>
<div class="t" style="right:649.5px;top:448.6px;text-align:right;font-size:12.500px;color:#595959">10</div>
<div class="t" style="right:649.5px;top:440.40000000000003px;text-align:right;font-size:12.500px;color:#595959">20</div>
<div class="t" style="right:649.5px;top:432.2px;text-align:right;font-size:12.500px;color:#595959">30</div>
<div class="t" style="right:649.5px;top:424.0px;text-align:right;font-size:12.500px;color:#595959">40</div>
<div class="t" style="right:649.5px;top:415.8px;text-align:right;font-size:12.500px;color:#595959">50</div>
<div class="t" style="left:273.0px;top:470px;width:0;height:0"><div style="position:absolute;right:0;top:0;transform-origin:100% 0;transform:rotate(-90deg) translateY(-6.200px);font-size:11.300px;color:#595959;white-space:nowrap;line-height:1;letter-spacing:-0.100px">Глубокая</div></div>
<div class="t c" style="left:-127.03499999999997px;width:800px;top:544.5px;font-size:11.500px;color:#595959">1</div>
<div class="t" style="left:316.3px;top:470px;width:0;height:0"><div style="position:absolute;right:0;top:0;transform-origin:100% 0;transform:rotate(-90deg) translateY(-6.200px);font-size:11.300px;color:#595959;white-space:nowrap;line-height:1;letter-spacing:-0.100px">Длинная</div></div>
<div class="t c" style="left:-83.70499999999998px;width:800px;top:544.5px;font-size:11.500px;color:#595959">2</div>
<div class="t" style="left:359.6px;top:470px;width:0;height:0"><div style="position:absolute;right:0;top:0;transform-origin:100% 0;transform:rotate(-90deg) translateY(-6.200px);font-size:11.300px;color:#595959;white-space:nowrap;line-height:1;letter-spacing:-0.100px">Короткая</div></div>
<div class="t c" style="left:-40.375px;width:800px;top:544.5px;font-size:11.500px;color:#595959">3</div>
<div class="t" style="left:403.0px;top:470px;width:0;height:0"><div style="position:absolute;right:0;top:0;transform-origin:100% 0;transform:rotate(-90deg) translateY(-6.200px);font-size:11.300px;color:#595959;white-space:nowrap;line-height:1;letter-spacing:-0.100px">Дум</div></div>
<div class="t c" style="left:2.955000000000041px;width:800px;top:544.5px;font-size:11.500px;color:#595959">4</div>
<div class="t" style="left:446.3px;top:470px;width:0;height:0"><div style="position:absolute;right:0;top:0;transform-origin:100% 0;transform:rotate(-90deg) translateY(-6.200px);font-size:11.300px;color:#595959;white-space:nowrap;line-height:1;letter-spacing:-0.100px">Овальная</div></div>
<div class="t c" style="left:46.28499999999997px;width:800px;top:544.5px;font-size:11.500px;color:#595959">5</div>
<div class="t" style="left:489.6px;top:470px;width:0;height:0"><div style="position:absolute;right:0;top:0;transform-origin:100% 0;transform:rotate(-90deg) translateY(-6.200px);font-size:11.300px;color:#595959;white-space:nowrap;line-height:1;letter-spacing:-0.100px">Квадратная</div></div>
<div class="t c" style="left:89.61500000000001px;width:800px;top:544.5px;font-size:11.500px;color:#595959">6</div>
<div class="t" style="left:532.9px;top:470px;width:0;height:0"><div style="position:absolute;right:0;top:0;transform-origin:100% 0;transform:rotate(-90deg) translateY(-6.200px);font-size:11.300px;color:#595959;white-space:nowrap;line-height:1;letter-spacing:-0.100px">Странная</div></div>
<div class="t c" style="left:132.94499999999994px;width:800px;top:544.5px;font-size:11.500px;color:#595959">7</div>
<div class="t" style="left:576.3px;top:470px;width:0;height:0"><div style="position:absolute;right:0;top:0;transform-origin:100% 0;transform:rotate(-90deg) translateY(-6.200px);font-size:11.300px;color:#595959;white-space:nowrap;line-height:1;letter-spacing:-0.100px">Припять</div></div>
<div class="t c" style="left:176.27499999999998px;width:800px;top:544.5px;font-size:11.500px;color:#595959">8</div>
<div class="t" style="left:619.6px;top:470px;width:0;height:0"><div style="position:absolute;right:0;top:0;transform-origin:100% 0;transform:rotate(-90deg) translateY(-6.200px);font-size:11.300px;color:#595959;white-space:nowrap;line-height:1;letter-spacing:-0.100px">Отчуждение</div></div>
<div class="t c" style="left:219.60500000000002px;width:800px;top:544.5px;font-size:11.500px;color:#595959">9</div>
<div class="t" style="left:662.9px;top:470px;width:0;height:0"><div style="position:absolute;right:0;top:0;transform-origin:100% 0;transform:rotate(-90deg) translateY(-6.200px);font-size:11.300px;color:#595959;white-space:nowrap;line-height:1;letter-spacing:-0.100px">Безымянная</div></div>
<div class="t c" style="left:262.93499999999995px;width:800px;top:544.5px;font-size:11.500px;color:#595959">10</div>
<div class="t" style="left:357.5px;top:570.7px;font-size:11px;color:#595959;letter-spacing:0.024px">Количество травмированных работников 1 кв.</div>
<div class="t" style="left:357.5px;top:593.2px;font-size:11px;color:#595959;letter-spacing:0.024px">Количество травмированных работников 2 кв.</div>
<div class="t" style="left:357.5px;top:615.4000000000001px;font-size:11px;color:#595959;letter-spacing:0.024px">Количество травмированных работников 3 кв.</div>
<div class="t" style="left:357.5px;top:637.7px;font-size:11px;color:#595959;letter-spacing:0.024px">Количество травмированных работников 4 кв.</div>
<div class="a" style="left:215.0px;top:369.0px;width:11px;height:11px;border-radius:50%;background:#fff;border:1.600px solid #8a8a8a"></div>
<div class="a" style="left:454.5px;top:369.0px;width:11px;height:11px;border-radius:50%;background:#fff;border:1.600px solid #8a8a8a"></div>
<div class="a" style="left:694.0px;top:369.0px;width:11px;height:11px;border-radius:50%;background:#fff;border:1.600px solid #8a8a8a"></div>
<div class="a" style="left:215.0px;top:512.5px;width:11px;height:11px;border-radius:50%;background:#fff;border:1.600px solid #8a8a8a"></div>
<div class="a" style="left:694.0px;top:512.5px;width:11px;height:11px;border-radius:50%;background:#fff;border:1.600px solid #8a8a8a"></div>
<div class="a" style="left:215.0px;top:656.0px;width:11px;height:11px;border-radius:50%;background:#fff;border:1.600px solid #8a8a8a"></div>
<div class="a" style="left:454.5px;top:656.0px;width:11px;height:11px;border-radius:50%;background:#fff;border:1.600px solid #8a8a8a"></div>
<div class="a" style="left:694.0px;top:656.0px;width:11px;height:11px;border-radius:50%;background:#fff;border:1.600px solid #8a8a8a"></div>
<div class="a" style="left:0px;top:798px;width:891px;height:28px;background:#e6e6e6"></div>
<div class="a" style="left:0px;top:798px;width:891px;height:1px;background:#ababab"></div>
<div class="a" style="left:0px;top:826px;width:891px;height:23px;background:#f1f1f1"></div>
<div class="a" style="left:0px;top:826px;width:891px;height:1px;background:#d0d0d0"></div>
<div class="a" style="left:101px;top:799px;width:61px;height:23px;background:#fff"></div>
<div class="a" style="left:101px;top:821px;width:61px;height:2px;background:#217346"></div>
<div class="t" style="left:113px;top:805.5px;font-size:12.500px;font-weight:bold;color:#217346;letter-spacing:-0.370px">Лист1</div>
<div class="t" style="left:175px;top:805.5px;font-size:12.500px;color:#444;letter-spacing:-0.528px">Лист3</div>
<div class="t" style="left:234.5px;top:805.5px;font-size:12.500px;color:#444;letter-spacing:-0.403px">Лист2</div>
<div class="a" style="left:221px;top:803px;width:1px;height:19px;background:#ababab"></div>
<div class="a" style="left:280px;top:803px;width:1px;height:19px;background:#ababab"></div>
<svg style="left:313px;top:803px" width="18" height="18" viewBox="0 0 18 18"><circle cx="9" cy="9" r="7.800" fill="none" stroke="#6a6a6a" stroke-width="1.100"/><path d="M9 4.800v8.400M4.800 9h8.400" stroke="#6a6a6a" stroke-width="1.500"/></svg>
<div class="a" style="left:534.3px;top:808px;width:1.5px;height:1.5px;background:#aaa"></div>
<div class="a" style="left:534.3px;top:812px;width:1.5px;height:1.5px;background:#aaa"></div>
<div class="a" style="left:534.3px;top:816px;width:1.5px;height:1.5px;background:#aaa"></div>
<div class="a" style="left:565px;top:805px;width:291px;height:16px;background:#d0d0d0"></div>
<div class="a" style="left:551px;top:805px;width:15px;height:16px;background:#fff;border:1px solid #c6c6c6"></div>
<svg style="left:555px;top:808.500px" width="6" height="9" viewBox="0 0 6 9"><path d="M5.500 0.500v8l-4.500-4z" fill="#555"/></svg>
<div class="a" style="left:565px;top:805px;width:258px;height:16px;background:#fff;border:1px solid #ababab"></div>
<div class="a" style="left:855px;top:805px;width:15px;height:16px;background:#fff;border:1px solid #c6c6c6"></div>
<svg style="left:860px;top:808.500px" width="6" height="9" viewBox="0 0 6 9"><path d="M0.500 0.500v8l4.500-4z" fill="#555"/></svg>
<div class="t" style="left:8.5px;top:831.3px;font-size:12px;color:#444;letter-spacing:-0.211px">Готово</div>
<svg style="left:64px;top:830px" width="16" height="15" viewBox="0 0 16 15"><circle cx="4.200" cy="4" r="3" fill="#666"/><rect x="4.500" y="5.500" width="9" height="8" fill="#fff" stroke="#666"/><rect x="7" y="2" width="7" height="2" fill="#666"/><path d="M6.500 8h5.500M6.500 10.500h5.500M8 7v5.500M10.500 7v5.500" stroke="#666" stroke-width="0.800"/></svg>
<div class="t" style="left:285px;top:831.3px;font-size:12px;color:#444;letter-spacing:-0.571px">Среднее: 18,84</div>
<div class="t" style="left:414.5px;top:831.3px;font-size:12px;color:#444;letter-spacing:-0.304px">Количество: 67</div>
<div class="t" style="left:511.5px;top:831.3px;font-size:12px;color:#444;letter-spacing:-0.766px">Сумма: 942</div>
<div class="a" style="left:587px;top:827px;width:36px;height:21px;background:#d2d2d2"></div>
<svg style="left:587px;top:827px" width="120" height="21" viewBox="587 827 120 21" fill="none" stroke="#555" stroke-width="1">
<path d="M599.500 831.500h12v12h-12zM603.500 831.500v12M607.500 831.500v12M599.500 835.500h12M599.500 839.500h12"/>
<path d="M638.500 831.500h12v12h-12z"/><path d="M641.500 834.500h6v6h-6zM643 836.500h3M643 838.500h3" stroke-width="0.900"/>
<path d="M675.500 830.500h13v12h-13zM679.500 830.500v7M684.500 830.500v7M675.500 837.500h13"/>
</svg>
<div class="a" style="left:705.5px;top:836px;width:7px;height:1.7px;background:#444"></div>
<div class="a" style="left:716.5px;top:836.5px;width:99.5px;height:1px;background:#8a8a8a"></div>
<div class="a" style="left:765.3px;top:830.5px;width:3.4px;height:12.5px;background:#444"></div>
<svg style="left:819.500px;top:832.300px" width="9" height="9" viewBox="0 0 9 9"><path d="M4.500 0v9M0 4.500h9" stroke="#444" stroke-width="1.700"/></svg>
<div class="t" style="left:845px;top:831.3px;font-size:12px;color:#444;letter-spacing:-1.231px">100%</div>
<svg style="left:0;top:0" width="300" height="849" viewBox="0 0 300 849">
<rect x="22.500" y="771" width="64.500" height="51.500" rx="6" fill="rgba(255,255,255,0.35)" stroke="rgba(150,150,150,0.55)" stroke-width="1"/>
<rect x="26.500" y="774.500" width="57" height="44.500" rx="5" fill="rgba(255,255,255,0.25)" stroke="rgba(175,175,175,0.7)" stroke-width="3.300"/>
<path d="M43 822.500v4.500q0 1 1 1h18.500q1 0 1-1v-4.500" fill="rgba(255,255,255,0.4)" stroke="rgba(150,150,150,0.55)" stroke-width="1"/>
<path d="M54.500 802l-14.500-14.500" stroke="rgba(175,175,175,0.85)" stroke-width="3.200" stroke-linecap="round" fill="none"/>
<path d="M31 779l15.500 4.500-11 11z" fill="rgba(175,175,175,0.85)"/>
<path d="M33 812l-3.500-3.500 3.500-3.500zM57.500 805l3.500 3.500-3.500 3.500z" fill="rgba(200,200,200,0.5)"/>
<text x="93.500" y="809.700" font-family="DejaVu Sans,sans-serif" font-weight="bold" font-size="33.500" fill="rgba(248,120,145,0.55)" textLength="56" lengthAdjust="spacingAndGlyphs">OS</text>
<text x="161" y="810.400" font-family="DejaVu Sans,sans-serif" font-weight="bold" font-size="35" fill="rgba(255,255,255,0.5)" stroke="rgba(150,150,150,0.42)" stroke-width="1.300" textLength="124" lengthAdjust="spacingAndGlyphs">Helper</text>
</svg>
<div class="a" style="left:382px;top:109px;width:372px;height:107px;background:#fff;border:1px solid #c6c6c6;box-shadow:1px 1px 3px rgba(0,0,0,0.2)"></div>
<div class="a" style="left:383px;top:110px;width:369px;height:23px;background:#ebebeb"></div>
<div class="t" style="left:392.5px;top:115.5px;font-size:12px;font-weight:bold;color:#5a5a5a;letter-spacing:-0.204px">Комбинированная</div>
<div class="a" style="left:383px;top:133px;width:56px;height:56px;background:#c6c6c6"></div>
<div class="a" style="left:383px;top:189px;width:369px;height:1px;background:#e1e1e1"></div>
<svg style="left:383px;top:133px" width="370" height="83" viewBox="383 133 370 83" fill="none" stroke="#6a6a6a" stroke-width="1">
<rect x="398.800" y="152.600" width="5.400" height="24" fill="#fff"/><rect x="404.200" y="146.200" width="6.500" height="30.300" fill="#d6d6d6"/>
<rect x="413.700" y="150.200" width="5.700" height="26.300" fill="#fff"/><rect x="419.400" y="155.300" width="6.500" height="21.200" fill="#d6d6d6"/>
<path d="M393.500 145v31.500h36"/><path d="M393.500 172l13.800-11.700 9.100 8.100 12.600-13.100"/>
<rect x="453.300" y="152.200" width="5.500" height="24.300" fill="#fff"/><rect x="458.800" y="146.600" width="6" height="30" fill="#d6d6d6"/>
<rect x="468.300" y="150.200" width="6.200" height="26.300" fill="#fff"/><rect x="474.500" y="155" width="6" height="21.500" fill="#d6d6d6"/>
<path d="M448.300 145v31.500h37"/><path d="M448.300 172l13.800-11.700 9.100 8.100 12.600-13.100"/><path d="M485.500 144v33" stroke-dasharray="1 2"/>
<path d="M504.600 145v31.500h35V152.200h-7.600l-8-7-12.700 14.100-6.700-6.100" fill="#d6d6d6"/>
<rect x="509.300" y="164" width="5" height="12.500" fill="#fff"/><rect x="514.300" y="157.900" width="6.500" height="18.600" fill="#d6d6d6"/>
<rect x="524.400" y="155.200" width="6.100" height="21.300" fill="#fff"/><rect x="530.500" y="165" width="5.500" height="11.500" fill="#d6d6d6"/>
<path d="M388.500 197v12.500h14.500" stroke-width="0.900"/><path d="M391.500 209v-7h2.500v7M394 209v-10h2.500v10M397.500 209v-8h2.500v8M400 209v-5h2v5" stroke-width="0.800"/><path d="M388.500 206l4-5 3 4 3.500-5 3 4" stroke-width="0.700"/>
</svg>
<div class="t" style="left:415px;top:196.8px;font-size:12px;color:#444;letter-spacing:-0.022px"><u>С</u>оздать настраиваемую комбинированную диаграмму...</div>
<div class="a" style="left:432px;top:167px;width:248px;height:128px;background:#fff;border:1px solid #c8c8c8;box-shadow:1px 1px 3px rgba(0,0,0,0.2)"></div>
<div class="t" style="left:444px;top:174.8px;font-size:12px;font-weight:bold;color:#484848;letter-spacing:-0.190px">Гистограмма с группировкой и график</div>
<div class="t" style="left:444px;top:197px;font-size:12px;color:#5c5c5c;letter-spacing:-0.142px">Этот тип диаграммы используется:</div>
<div class="t" style="left:444px;top:211.9px;font-size:12px;color:#5c5c5c;letter-spacing:-0.155px">• для выделения различных типов</div>
<div class="t" style="left:444px;top:226.7px;font-size:12px;color:#5c5c5c;letter-spacing:-0.150px">сведений.</div>
<div class="t" style="left:444px;top:256.5px;font-size:12px;color:#5c5c5c;letter-spacing:-0.150px">Применяется в случаях:</div>
<div class="t" style="left:444px;top:271.6px;font-size:12px;color:#5c5c5c;letter-spacing:-0.075px">• когда типы данных различаются.</div>
<svg style="left:0;top:0;filter:drop-shadow(1px 2.500px 1.800px rgba(0,0,0,0.5))" width="891" height="849" viewBox="0 0 891 849"><polygon points="206.6,151.2 356.9,115.9 358.9,123.8 383.6,102.4 351.7,95.5 353.7,103.3 204.8,144.4" fill="#f8444a"/><polygon points="283.9,307.6 392.5,194.1 398.9,200.1 407.6,168.6 376.9,179.7 383.3,185.7 278.7,302.8" fill="#f8444a"/><circle cx="206.800" cy="149.800" r="31.600" fill="#0aaa8c"/><circle cx="275.700" cy="300" r="31.500" fill="#0aaa8c"/><clipPath id="c1"><rect x="190" y="125" width="40" height="36.900"/><rect x="206.600" y="125" width="6" height="41.800"/></clipPath><g clip-path="url(#c1)"><text x="195.600" y="166.800" font-family="Liberation Sans,sans-serif" font-size="47.500" fill="#fff" stroke="#fff" stroke-width="1.500">1</text></g><text x="275.800" y="316.900" text-anchor="middle" font-family="Liberation Sans,sans-serif" font-size="47.500" fill="#fff" stroke="#fff" stroke-width="0.700">2</text></svg>
<div class="a" style="left:0px;top:0px;width:2px;height:849px;background:#217346"></div>
<div class="a" style="left:890px;top:0px;width:1px;height:849px;background:#217346"></div>
<div class="a" style="left:0px;top:847px;width:891px;height:2px;background:#217346"></div>
</body></html>
